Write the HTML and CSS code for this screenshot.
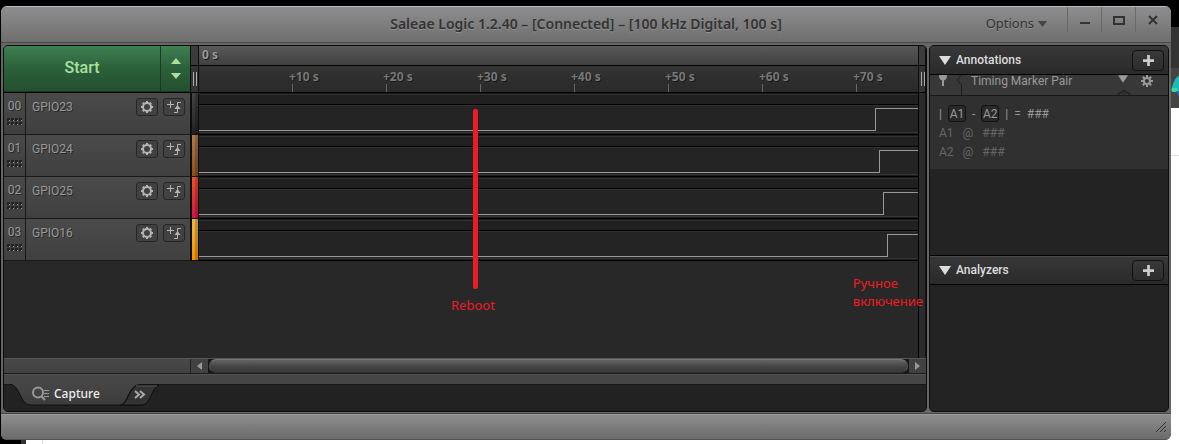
FILE: index.html
```html
<!DOCTYPE html>
<html lang="en">
<head>
<meta charset="utf-8">
<title>Saleae Logic</title>
<link rel="stylesheet" href="styles.css">
</head>
<body>
<svg class="defs" aria-hidden="true">
  <symbol id="gear" viewBox="0 0 14 14">
    <circle cx="7" cy="7" r="4" fill="none" stroke="currentColor" stroke-width="2"/>
    <path d="M7 1v2M7 11v2M1 7h2M11 7h2M2.8 2.8l1.4 1.4M9.8 9.8l1.4 1.4M2.8 11.2l1.4-1.4M9.8 4.2l1.4-1.4" stroke="currentColor" stroke-width="2"/>
  </symbol>
  <symbol id="edge" viewBox="0 0 16 14">
    <path d="M1 4.500h7M4.500 1v7M8 12.500h3.500v-10H15M9 8.500h5" fill="none" stroke="currentColor" stroke-width="1"/>
    <path d="M8.500 9l3-4 3 4z" fill="currentColor"/>
  </symbol>
  <symbol id="grip" viewBox="0 0 15 7">
    <path d="M0 1.500h15M0 5.500h15" stroke="#222" stroke-width="3" stroke-dasharray="3 1"/>
    <path d="M1 2.500h15M1 6.500h15" stroke="#999" stroke-width="1" stroke-dasharray="1 3" stroke-dashoffset="-1"/>
  </symbol>
  <symbol id="plus" viewBox="0 0 12 12"><path d="M6 0v12M0 6h12" stroke="currentColor" stroke-width="3"/></symbol>
  <symbol id="down" viewBox="0 0 12 9"><path d="M0 0h12L6 9z" fill="currentColor"/></symbol>
</svg>
<div class="desktop">
  <div class="window">
    <header class="titlebar">
      <h1 class="title">Saleae Logic 1.2.40 – [Connected] – [100 kHz Digital, 100 s]</h1>
      <button class="options">Options <svg width="9" height="6"><path d="M0 0h9L4.500 6z" fill="#444"/></svg></button>
      <div class="controls">
        <button aria-label="Minimize"><svg width="12" height="12"><path d="M1 9h10" stroke="currentColor" stroke-width="2"/></svg></button>
        <button aria-label="Maximize"><svg width="12" height="12"><rect x="1" y="3" width="10" height="7" fill="none" stroke="currentColor" stroke-width="2"/></svg></button>
        <button aria-label="Close"><svg width="12" height="12"><path d="M2 2l8 8M10 2l-8 8" stroke="currentColor" stroke-width="2"/></svg></button>
      </div>
    </header>
    <div class="body">
      <main class="capture">
        <div class="head">
          <div class="start">
            <button class="go">Start</button>
            <div class="spin">
              <button aria-label="More"><svg width="10" height="6"><path d="M0 6h10L5 0z" fill="#a9e0a0"/></svg></button>
              <button aria-label="Less"><svg width="10" height="6"><path d="M0 0h10L5 6z" fill="#a9e0a0"/></svg></button>
            </div>
          </div>
          <div class="handle"><i></i></div>
          <div class="ruler">
            <div class="origin">0 s</div>
            <div class="ticks"><span>+10 s</span><span>+20 s</span><span>+30 s</span><span>+40 s</span><span>+50 s</span><span>+60 s</span><span>+70 s</span></div>
          </div>
          <div class="handle"><i></i></div>
        </div>
        <div class="channels">
          <div class="row">
            <div class="num">00<svg width="15" height="7"><use href="#grip"/></svg></div>
            <div class="name">GPIO23<button aria-label="Settings"><svg width="14" height="14"><use href="#gear"/></svg></button><button aria-label="Trigger"><svg width="16" height="14"><use href="#edge"/></svg></button></div>
            <div class="color black"></div>
            <div class="lane"><div class="low"></div><div class="high h0"></div></div><div class="edge"></div>
          </div>
          <div class="row">
            <div class="num">01<svg width="15" height="7"><use href="#grip"/></svg></div>
            <div class="name">GPIO24<button aria-label="Settings"><svg width="14" height="14"><use href="#gear"/></svg></button><button aria-label="Trigger"><svg width="16" height="14"><use href="#edge"/></svg></button></div>
            <div class="color brown"></div>
            <div class="lane"><div class="low"></div><div class="high h1"></div></div><div class="edge"></div>
          </div>
          <div class="row">
            <div class="num">02<svg width="15" height="7"><use href="#grip"/></svg></div>
            <div class="name">GPIO25<button aria-label="Settings"><svg width="14" height="14"><use href="#gear"/></svg></button><button aria-label="Trigger"><svg width="16" height="14"><use href="#edge"/></svg></button></div>
            <div class="color red"></div>
            <div class="lane"><div class="low"></div><div class="high h2"></div></div><div class="edge"></div>
          </div>
          <div class="row">
            <div class="num">03<svg width="15" height="7"><use href="#grip"/></svg></div>
            <div class="name">GPIO16<button aria-label="Settings"><svg width="14" height="14"><use href="#gear"/></svg></button><button aria-label="Trigger"><svg width="16" height="14"><use href="#edge"/></svg></button></div>
            <div class="color orange"></div>
            <div class="lane"><div class="low"></div><div class="high h3"></div></div><div class="edge"></div>
          </div>
          <div class="stroke"></div>
          <div class="note reboot">Reboot</div>
          <div class="note manual" lang="ru">Ручное<br>включение</div>
        </div>
        <div class="empty"><div class="edge"></div></div>
        <div class="scroll">
          <div class="pad"></div>
          <button aria-label="Scroll left"><svg width="5" height="8"><path d="M5 0v8L0 4z" fill="#999"/></svg></button>
          <div class="track"><div class="thumb"></div></div>
          <button aria-label="Scroll right"><svg width="5" height="8"><path d="M0 0v8l5-4z" fill="#999"/></svg></button>
        </div>
        <div class="band"></div>
        <div class="tabs">
          <svg class="shape" width="160" height="23">
            <defs><linearGradient id="tab" x2="0" y2="1"><stop stop-color="#464646"/><stop offset="1" stop-color="#3b3b3b"/></linearGradient></defs>
            <path d="M0 0H6C16 0 17 21 26 21H116C124 21 124 0 136 0z" fill="url(#tab)"/>
            <path d="M5 0C16 0 16 21 26 21H116C124 21 124 1 136 1H155C148 1 147 21 138 21H116" fill="none" stroke="#111"/>
            <path d="M117 21C125 20 124 1 136 1H155C148 2 147 21 138 21z" fill="#333" stroke="#111"/>
            <path d="M132 2H153" stroke="#555"/>
          </svg>
          <button class="tab"><svg width="17" height="16"><circle cx="6" cy="6.500" r="5" fill="none" stroke="currentColor" stroke-width="2"/><path d="M9 10l4 4" stroke="currentColor" stroke-width="2"/><path d="M12 4.500h5M12 7.500h5M12 10.500h5" stroke="currentColor"/></svg>Capture</button>
          <button class="more" aria-label="More tabs"><svg width="12" height="9"><path d="M1 1l4 3.500L1 8M6 1l4 3.500L6 8" fill="none" stroke="currentColor" stroke-width="2"/></svg></button>
        </div>
      </main>
      <aside class="side">
        <section class="annotations">
          <div class="section-head"><svg width="12" height="9"><use href="#down"/></svg><h2>Annotations</h2><button aria-label="Add annotation"><svg width="11" height="11"><use href="#plus"/></svg></button></div>
          <div class="pair-head">
            <svg width="8" height="12"><path d="M0 0h8c0 3-1 5-3 5.500V11H3V5.500C1 5 0 3 0 0z" fill="#999"/></svg>
            <svg class="notch" width="6" height="22"><path d="M5.500 0L1.500 5l4 5v12" fill="none" stroke="#1d1d1d"/></svg>
            <span class="pair-name">Timing Marker Pair</span>
            <svg width="10" height="8" viewBox="0 0 12 9"><path d="M0 0h12L6 9z" fill="currentColor"/></svg>
            <svg class="cog" width="14" height="14" viewBox="0 0 14 14"><path d="M7 1v12M1 7h12M2.800 2.800l8.400 8.400M11.200 2.800l-8.400 8.400" stroke="#999" stroke-width="2"/><circle cx="7" cy="7" r="4" fill="#999"/><circle cx="7" cy="7" r="2" fill="#333"/></svg>
            <svg class="caret" width="14" height="5"><path d="M0 4.500L7 .5l7 4" fill="#303030" stroke="#1a1a1a"/></svg>
          </div>
          <div class="pair">
            <div class="formula"><span>|</span><b>A1</b><span>-</span><b>A2</b><span>|</span><span>=</span><span>###</span></div>
            <div class="value"><span>A1</span><span>@</span><span>###</span></div>
            <div class="value"><span>A2</span><span>@</span><span>###</span></div>
          </div>
        </section>
        <section class="analyzers">
          <div class="section-head"><svg width="12" height="9"><use href="#down"/></svg><h2>Analyzers</h2><button aria-label="Add analyzer"><svg width="11" height="11"><use href="#plus"/></svg></button></div>
        </section>
      </aside>
    </div>
    <footer class="status"><svg width="12" height="12"><path d="M1 11L11 1M5 11l6-6M9 11l2-2" stroke="#333"/></svg></footer>
  </div>
  <div class="behind">
    <svg width="8" height="20"><path d="M8 0C4 1 2 7 0 15h8z" fill="#1cb9b5"/><path d="M1 12h5l1 4H1z" fill="#45d19a"/><path d="M5 15h3v5z" fill="#1976d2"/></svg>
  </div>
</div>
</body>
</html>
```

FILE: styles.css
```css
* { box-sizing: border-box; }
body { margin: 0; background: #fff; font-family: Roboto, "Liberation Sans", sans-serif; overflow: hidden; }
button { margin: 0; padding: 0; border: 0; background: none; font: inherit; color: inherit; display: flex; align-items: center; justify-content: center; }
svg { display: block; flex: none; }
h1, h2 { margin: 0; }
.defs { position: absolute; width: 0; height: 0; }

.desktop {
  display: flex; height: 100vh; padding: 6px 0 4px 1px;
  background:
    linear-gradient(#000, #000) 0 0 / 100% 12px no-repeat,
    linear-gradient(#000, #000) 0 100% / 21px 12px no-repeat,
    linear-gradient(#333, #333) 21px 100% / 5px 12px no-repeat,
    linear-gradient(#ddd, #ddd) 42px 100% / 1px 4px no-repeat,
    linear-gradient(90deg, #000 1px, #fff 1px);
}
.window { flex: 1; min-width: 0; display: flex; flex-direction: column; border-radius: 6px; background: #666; overflow: hidden; }
.behind { width: 8px; margin: -6px 0 -4px; padding-top: 76px; background: linear-gradient(#000 27px, #333 27px 68px, #444 68px 108px, #fff 108px 155px, #ddd 155px 156px, #fff 156px); }

.titlebar { flex: none; height: 37px; display: flex; position: relative; justify-content: flex-end; background: linear-gradient(#8e8e90, #6e6e6e); border-top: 1px solid #bcbcbc; border-bottom: 1px solid #4a4a4a; color: #333; }
.title { position: absolute; inset: 0; text-align: center; font: 600 14px/34px "Noto Sans", sans-serif; pointer-events: none; text-shadow: 0 1px 0 #909090; }
.options { height: 33px; gap: 4px; margin-right: 20px; font: 13px/33px "Noto Sans", sans-serif; text-shadow: 0 1px 0 #909090; }
.controls { display: flex; padding-right: 2px; }
.controls button { width: 34px; height: 25px; border-left: 1px solid #696969; }

.body { flex: 1; min-height: 0; display: flex; gap: 2px; padding: 2px; }
.capture { flex: 1; min-width: 0; display: flex; flex-direction: column; border: 1px solid #0d0d0d; border-radius: 5px; background: #282828; overflow: hidden; }

.head { display: flex; height: 47px; flex: none; border-bottom: 1px solid #000; }
.start { display: flex; width: 186px; flex: none; background: linear-gradient(#3f8052, #2b6039 50%, #24502f); color: #a9e0a0; border-bottom: 1px solid #173a20; }
.go { flex: 1; font-size: 16px; font-weight: 500; padding-bottom: 2px; }
.spin { width: 30px; border-left: 1px solid #1b3a22; display: flex; flex-direction: column; justify-content: center; gap: 9px; align-items: center; }
.handle { width: 9px; flex: none; border: solid #0d0d0d; border-width: 0 1px; background: linear-gradient(#3b3b3b 19px, #000 19px 20px, #343434 20px); padding: 26px 1px 0 2px; }
.handle:last-child { width: 8px; }
.handle i { display: block; width: 4px; height: 14px; border: solid #aaa; border-width: 0 1px; }
.ruler { flex: 1; min-width: 0; font: bold 12px/14px "Noto Sans", sans-serif; color: #777; text-shadow: 1px 1px 0 #181818; }
.origin { height: 20px; padding: 2px 3px; color: #999; background: linear-gradient(#585858, #414141); border-bottom: 1px solid #000; }
.ticks { height: 26px; padding: 4px 0 0 90px; display: flex; overflow: hidden; background: linear-gradient(#343434, #292929); }
.ticks span { width: 94px; flex: none; }
.ticks span::after { content: ""; display: block; width: 1px; height: 8px; margin-left: 3px; background: #666; }

.channels { position: relative; flex: none; }
.row { display: flex; height: 42px; color: #999; }
.num { width: 22px; display: flex; flex-direction: column; align-items: center; gap: 3px; padding-top: 4px; font-size: 12px; line-height: 18px; background: linear-gradient(#494949, #404040); border: solid #191919; border-width: 0 1px 1px 0; text-shadow: 1px 1px 0 #292929; }
.name { width: 164px; display: flex; align-items: flex-start; padding: 5px 5px 0 6px; gap: 5px; font-size: 12px; line-height: 18px; background: linear-gradient(#4a4a4a, #404040); border-bottom: 1px solid #191919; text-shadow: 1px 1px 0 #292929; }
.name button { width: 22px; height: 18px; border: 1px solid #262626; border-radius: 3px; background: #414141; color: #b5b5b5; }
.name button:first-of-type { margin-left: auto; }
.color { width: 9px; border: solid #0d0d0d; border-width: 0 1px 1px 2px; box-shadow: inset -3px 0 0 #0003; }
.black { background: linear-gradient(#444, #222); }
.brown { background: linear-gradient(#b07a50, #87501d); }
.red { background: linear-gradient(#f05028, #d01742); }
.orange { background: linear-gradient(#eeb54a, #f59200); }
.lane { flex: 1; min-width: 0; display: flex; padding: 15px 0 4px; background: linear-gradient(#191919 1px, #303030 1px 2px, #202020 2px 11px, #000 11px 12px, #303030 12px 13px, #242424 13px 39px, #363636 39px 40px, #1d1d1d 40px 41px, #000 41px); }
.low { flex: 1; border-bottom: 1px solid #999; }
.high { border: solid #999; border-width: 1px 0 0 1px; }
.h0 { width: 43px; }
.h1 { width: 39px; }
.h2 { width: 35px; }
.h3 { width: 31px; }
.edge { width: 8px; flex: none; background: #2b2b2b; border-left: 1px solid #000; border-right: 1px solid #111; }
.stroke { position: absolute; left: 469px; top: 16px; width: 5px; height: 180px; border-radius: 2px; background: #ed1c24; }
.note { position: absolute; font: 13px/18px "Noto Sans", sans-serif; color: #ed1c24; }
.reboot { left: 447px; top: 203px; }
.manual { right: 3px; top: 181px; }

.empty { flex: 1; display: flex; justify-content: flex-end; }
.scroll { display: flex; height: 16px; flex: none; background: #414141; border-bottom: 1px solid #1a1a1a; border-top: 1px solid #555; }
.pad { width: 187px; border-right: 1px solid #222; background: linear-gradient(#484848, #414141); }
.scroll button { width: 17px; }
.track { flex: 1; background: #181818; padding: 0 1px; display: flex; }
.thumb { flex: 1; border: 1px solid #777; border-color: #777 #555 #333; border-radius: 7px; background: linear-gradient(#646464, #424242 60%, #3a3a3a); }
.band { height: 10px; flex: none; background: #464646; border-top: 1px solid #555; }
.tabs { position: relative; height: 27px; flex: none; display: flex; background: #222; border-top: 1px solid #181818; }
.shape { position: absolute; left: 0; top: -1px; }
.tab, .more { position: relative; height: 18px; color: #aaa; }
.tab { gap: 5px; margin-left: 28px; font: 500 12px/18px "Noto Sans", sans-serif; color: #eee; }
.tab svg { color: #999; }
.more { margin-left: 34px; }

.side { width: 240px; flex: none; display: flex; flex-direction: column; background: #232323; border: 1px solid #0d0d0d; border-radius: 5px; overflow: hidden; }
.annotations, .analyzers { flex: none; }
.annotations { height: 209px; }
.section-head { height: 29px; display: flex; align-items: center; padding: 0 4px 0 9px; gap: 5px; color: #ddd; background: linear-gradient(#383838, #2a2a2a); border-bottom: 1px solid #000; }
.analyzers .section-head { border-top: 1px solid #000; height: 30px; box-shadow: inset 0 1px 0 #4a4a4a; }
.section-head h2 { flex: 1; font-size: 12px; font-weight: 500; line-height: 20px; }
.section-head button { width: 32px; height: 21px; border: 1px solid #111; border-radius: 4px; background: linear-gradient(#383838, #2d2d2d); color: #ccc; }
.pair-head { position: relative; height: 21px; display: flex; align-items: flex-start; padding-left: 9px; background: #383838; border-bottom: 1px solid #1a1a1a; color: #999; }
.notch { margin: 0 9px; height: 20px; }
.pair-name { flex: 1; font-size: 12px; line-height: 12px; color: #999; }
.cog { margin: -1px 14px 0 12px; }
.caret { position: absolute; right: 37px; bottom: 0; }
.pair { padding: 8px 9px 7px; background: #303030; color: #999; font-size: 12px; line-height: 20px; }
.formula, .value { display: flex; gap: 9px; }
.formula { gap: 6px; }
.formula b { width: 18px; height: 17px; margin-top: 1px; border: 1px solid #111; border-radius: 3px; background: #292929; font-weight: 400; line-height: 16px; text-align: center; }
.value { color: #666; line-height: 19px; }

.status { height: 26px; flex: none; display: flex; align-items: center; justify-content: flex-end; padding-right: 4px; background: linear-gradient(#8d8d8f, #6b6b6b); border-top: 1px solid #999; border-bottom: 1px solid #555; box-shadow: 0 -1px 0 #444; }
```
